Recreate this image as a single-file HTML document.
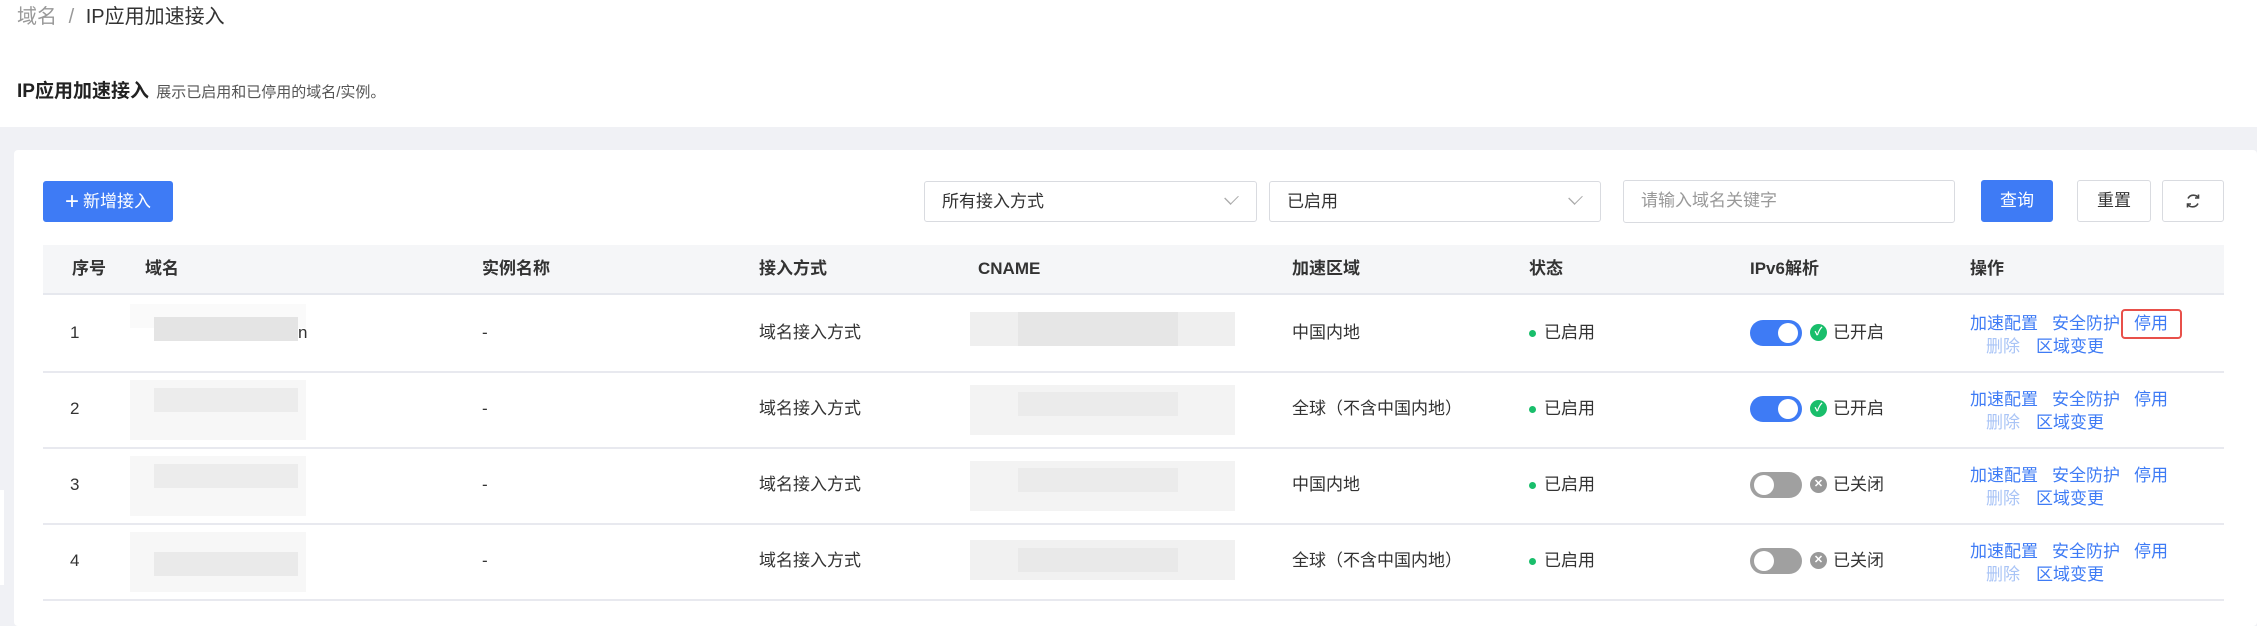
<!DOCTYPE html>
<html><head><meta charset="utf-8"><style>
*{margin:0;padding:0;box-sizing:border-box}
body{width:2257px;height:626px;background:#f0f1f5;position:relative;overflow:hidden;font-family:"Liberation Sans","Noto Sans CJK SC",sans-serif;color:#333}
.a{position:absolute;white-space:nowrap;line-height:24px}
.top{position:absolute;left:0;top:0;width:2257px;height:127px;background:#fff}
.card{position:absolute;left:14px;top:150px;width:2243px;height:476px;background:#fff;border-radius:4px}
.btn{position:absolute;border:1px solid #d9dbe0;border-radius:3px;background:#fff;font-size:17px;display:flex;align-items:center;justify-content:center;line-height:20px}
.sel{position:absolute;border:1px solid #d9dbe0;border-radius:3px;height:41px;top:181px;font-size:17px;padding-left:17px;line-height:39px}
.chev{position:absolute;right:20px;top:11px;width:9px;height:9px;border-right:1.3px solid #aaa;border-bottom:1.3px solid #aaa;transform:rotate(45deg) scaleY(1.3)}
.th{position:absolute;top:245px;left:43px;width:2181px;height:50px;background:#f5f6f8;border-bottom:2px solid #e6e8ee}
.t{font-size:17px;color:#333}
.h{font-size:17px;font-weight:bold;color:#333}
.line{position:absolute;left:43px;width:2181px;height:2px;background:#e8e9ef}
.blk{position:absolute}
.lk{color:#3e7bf5;font-size:17px}
.lt{color:#a9c4f6;font-size:17px}
.tog{position:absolute;width:52px;height:26px;border-radius:13px}
.tog i{position:absolute;top:3px;width:20px;height:20px;border-radius:50%;background:#fff}
.ic{position:absolute;width:17px;height:17px;border-radius:50%;color:#fff;font-size:11px;text-align:center;line-height:17px;font-weight:bold}
.dot{position:absolute;width:7px;height:7px;border-radius:50%;background:#19be6b}
</style></head><body>
<div class="top"></div>
<div class="a" style="left:17px;top:5px;font-size:20px;color:#999">域名 <span style="margin:0 6px">/</span> <span style="color:#333">IP应用加速接入</span></div>
<div class="a" style="left:17px;top:80px;font-size:19px;font-weight:bold;color:#222">IP应用加速接入 <span style="font-weight:normal;font-size:15px;color:#555;margin-left:2px">展示已启用和已停用的域名/实例。</span></div>
<div class="a" style="left:0;top:490px;width:4px;height:95px;background:#fff"></div>
<div class="card"></div>
<div class="btn" style="left:43px;top:181px;width:130px;height:41px;background:#3e7bf5;border-color:#3e7bf5;color:#fff"><span style="font-size:24px;margin-right:4px;font-weight:300">+</span>新增接入</div>
<div class="sel" style="left:924px;width:333px">所有接入方式<div class="chev"></div></div>
<div class="sel" style="left:1269px;width:332px">已启用<div class="chev"></div></div>
<div class="sel" style="left:1623px;width:332px;color:#999;top:180px;height:43px">请输入域名关键字</div>
<div class="btn" style="left:1981px;top:180px;width:72px;height:42px;background:#3e7bf5;border-color:#3e7bf5;color:#fff">查询</div>
<div class="btn" style="left:2077px;top:180px;width:74px;height:42px">重置</div>
<div class="btn" style="left:2162px;top:180px;width:62px;height:42px"><svg width="18" height="18" viewBox="0 0 18 18" fill="none" stroke="#444" stroke-width="1.6"><path d="M4 6.5A6 6 0 0 1 14.5 6M14.5 2.5V6H11M14 11.5A6 6 0 0 1 3.5 12M3.5 15.5V12H7"/></svg></div>
<div class="th"></div>
<div class="a h" style="left:72px;top:257px">序号</div>
<div class="a h" style="left:145px;top:257px">域名</div>
<div class="a h" style="left:482px;top:257px">实例名称</div>
<div class="a h" style="left:759px;top:257px">接入方式</div>
<div class="a h" style="left:978px;top:257px">CNAME</div>
<div class="a h" style="left:1292px;top:257px">加速区域</div>
<div class="a h" style="left:1529px;top:257px">状态</div>
<div class="a h" style="left:1750px;top:257px">IPv6解析</div>
<div class="a h" style="left:1970px;top:257px">操作</div>

<div class="line" style="top:371px"></div>
<div class="line" style="top:447px"></div>
<div class="line" style="top:523px"></div>
<div class="line" style="top:599px"></div>

<!-- row1 -->
<div class="a t" style="left:70px;top:321px">1</div>
<div class="blk" style="left:130px;top:304px;width:176px;height:24px;background:#fafafa"></div>
<div class="blk" style="left:154px;top:317px;width:144px;height:24px;background:#e4e4e4"></div>
<div class="a t" style="left:298px;top:321px">n</div>
<div class="a t" style="left:482px;top:321px">-</div>
<div class="a t" style="left:759px;top:321px">域名接入方式</div>
<div class="blk" style="left:970px;top:312px;width:265px;height:34px;background:#efefef"></div>
<div class="blk" style="left:1018px;top:312px;width:160px;height:34px;background:#e6e6e6"></div>
<div class="a t" style="left:1292px;top:321px">中国内地</div>
<div class="dot" style="left:1529px;top:330px"></div><div class="a t" style="left:1544px;top:321px">已启用</div>
<div class="tog" style="left:1750px;top:320px;background:#3e7bf5"><i style="right:4px"></i></div>
<div class="ic" style="left:1810px;top:324px;background:#19be6b">✓</div>
<div class="a t" style="left:1833px;top:321px">已开启</div>
<div class="a lk" style="left:1970px;top:312px">加速配置</div>
<div class="a lk" style="left:2052px;top:312px">安全防护</div>
<div class="a lk" style="left:2134px;top:312px">停用</div>
<div class="a" style="left:2121px;top:309px;width:61px;height:30px;border:2px solid #e8504a;border-radius:4px"></div>
<div class="a lt" style="left:1986px;top:335px">删除</div>
<div class="a lk" style="left:2036px;top:335px">区域变更</div>

<!-- row2 -->
<div class="a t" style="left:70px;top:397px">2</div>
<div class="blk" style="left:130px;top:380px;width:176px;height:60px;background:#f7f7f7"></div>
<div class="blk" style="left:154px;top:388px;width:144px;height:24px;background:#ececec"></div>
<div class="a t" style="left:482px;top:397px">-</div>
<div class="a t" style="left:759px;top:397px">域名接入方式</div>
<div class="blk" style="left:970px;top:385px;width:265px;height:50px;background:#f3f3f3"></div>
<div class="blk" style="left:1018px;top:392px;width:160px;height:24px;background:#ebebeb"></div>
<div class="a t" style="left:1292px;top:397px">全球（不含中国内地）</div>
<div class="dot" style="left:1529px;top:406px"></div><div class="a t" style="left:1544px;top:397px">已启用</div>
<div class="tog" style="left:1750px;top:396px;background:#3e7bf5"><i style="right:4px"></i></div>
<div class="ic" style="left:1810px;top:400px;background:#19be6b">✓</div>
<div class="a t" style="left:1833px;top:397px">已开启</div>
<div class="a lk" style="left:1970px;top:388px">加速配置</div>
<div class="a lk" style="left:2052px;top:388px">安全防护</div>
<div class="a lk" style="left:2134px;top:388px">停用</div>
<div class="a lt" style="left:1986px;top:411px">删除</div>
<div class="a lk" style="left:2036px;top:411px">区域变更</div>

<!-- row3 -->
<div class="a t" style="left:70px;top:473px">3</div>
<div class="blk" style="left:130px;top:456px;width:176px;height:60px;background:#f7f7f7"></div>
<div class="blk" style="left:154px;top:464px;width:144px;height:24px;background:#ececec"></div>
<div class="a t" style="left:482px;top:473px">-</div>
<div class="a t" style="left:759px;top:473px">域名接入方式</div>
<div class="blk" style="left:970px;top:461px;width:265px;height:50px;background:#f3f3f3"></div>
<div class="blk" style="left:1018px;top:468px;width:160px;height:24px;background:#ebebeb"></div>
<div class="a t" style="left:1292px;top:473px">中国内地</div>
<div class="dot" style="left:1529px;top:482px"></div><div class="a t" style="left:1544px;top:473px">已启用</div>
<div class="tog" style="left:1750px;top:472px;background:#a0a0a0"><i style="left:4px"></i></div>
<div class="ic" style="left:1810px;top:476px;background:#999">✕</div>
<div class="a t" style="left:1833px;top:473px">已关闭</div>
<div class="a lk" style="left:1970px;top:464px">加速配置</div>
<div class="a lk" style="left:2052px;top:464px">安全防护</div>
<div class="a lk" style="left:2134px;top:464px">停用</div>
<div class="a lt" style="left:1986px;top:487px">删除</div>
<div class="a lk" style="left:2036px;top:487px">区域变更</div>

<!-- row4 -->
<div class="a t" style="left:70px;top:549px">4</div>
<div class="blk" style="left:130px;top:532px;width:176px;height:60px;background:#f7f7f7"></div>
<div class="blk" style="left:154px;top:552px;width:144px;height:24px;background:#eaeaea"></div>
<div class="a t" style="left:482px;top:549px">-</div>
<div class="a t" style="left:759px;top:549px">域名接入方式</div>
<div class="blk" style="left:970px;top:540px;width:265px;height:40px;background:#f1f1f1"></div>
<div class="blk" style="left:1018px;top:548px;width:160px;height:24px;background:#e9e9e9"></div>
<div class="a t" style="left:1292px;top:549px">全球（不含中国内地）</div>
<div class="dot" style="left:1529px;top:558px"></div><div class="a t" style="left:1544px;top:549px">已启用</div>
<div class="tog" style="left:1750px;top:548px;background:#a0a0a0"><i style="left:4px"></i></div>
<div class="ic" style="left:1810px;top:552px;background:#999">✕</div>
<div class="a t" style="left:1833px;top:549px">已关闭</div>
<div class="a lk" style="left:1970px;top:540px">加速配置</div>
<div class="a lk" style="left:2052px;top:540px">安全防护</div>
<div class="a lk" style="left:2134px;top:540px">停用</div>
<div class="a lt" style="left:1986px;top:563px">删除</div>
<div class="a lk" style="left:2036px;top:563px">区域变更</div>
</body></html>
